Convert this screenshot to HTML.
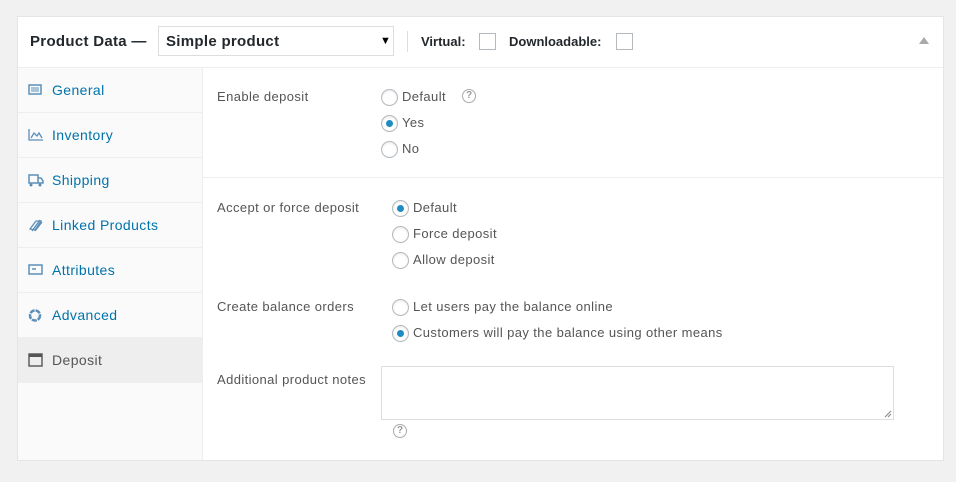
<!DOCTYPE html>
<html><head><style>
body{margin:0;width:956px;height:482px;background:#f1f1f1;font-family:"Liberation Sans",sans-serif;font-size:13px;color:#555;position:relative;overflow:hidden}
.a{position:absolute;white-space:nowrap}
.panel{position:absolute;left:17px;top:16px;width:925px;height:443px;background:#fff;border:1px solid #e5e5e5}
.side{position:absolute;left:18px;top:68px;width:184px;height:392px;background:#fafafa;border-right:1px solid #eee}
.tab{position:absolute;left:0;width:184px;height:44px;border-bottom:1px solid #eee;color:#0073aa;font-size:14px;letter-spacing:0.4px}
.tab span{position:absolute;left:34px;top:14px}
.tab svg{position:absolute;left:10px;top:15px}
.r{position:absolute;width:15px;height:15px;border:1px solid #b4b9be;border-radius:50%;background:#fff;box-shadow:inset 0 1px 2px rgba(0,0,0,.1)}
.r.on::after{content:"";position:absolute;left:4px;top:4px;width:7px;height:7px;border-radius:50%;background:#1e8cbe}
.lab{position:absolute;white-space:nowrap;font-size:13px;color:#555;letter-spacing:0.4px}
.help{position:absolute;width:12px;height:12px;border:1.5px solid #aaa;border-radius:50%;color:#999;font-size:10px;font-weight:bold;text-align:center;line-height:12px}
.cb{position:absolute;width:15px;height:15px;border:1px solid #b4b9be;background:#fff}
</style></head><body>
<div class="panel"></div>
<div class="a" style="left:18px;top:67px;width:925px;border-top:1px solid #eee"></div>
<div class="a" style="left:30px;top:33px;font-size:15px;font-weight:bold;color:#23282d;letter-spacing:0.3px">Product Data —</div>
<div class="a" style="left:158px;top:26px;width:234px;height:28px;border:1px solid #ddd;background:#fff"></div>
<div class="a" style="left:166px;top:33px;font-size:15px;font-weight:bold;color:#23282d;letter-spacing:0.3px">Simple product</div>
<div class="a" style="left:380px;top:35px;font-size:11px;color:#000">▼</div>
<div class="a" style="left:407px;top:31px;height:21px;border-left:1px solid #ddd"></div>
<div class="a" style="left:421px;top:34px;font-weight:bold;color:#23282d">Virtual:</div>
<div class="cb" style="left:479px;top:33px"></div>
<div class="a" style="left:509px;top:34px;font-weight:bold;color:#23282d">Downloadable:</div>
<div class="cb" style="left:616px;top:33px"></div>
<div class="a" style="left:919px;top:37px;width:0;height:0;border-left:5px solid transparent;border-right:5px solid transparent;border-bottom:7px solid #aaa"></div>

<div class="side">
<div class="tab" style="top:0"><svg width="14" height="14"><rect x="1" y="2" width="12" height="9" fill="none" stroke="#5b8fb9" stroke-width="1.5"/><path d="M4 4v5M6 4v5M8 4v5M10 4v5" stroke="#5b8fb9"/></svg><span>General</span></div>
<div class="tab" style="top:45px"><svg width="16" height="14"><path d="M1 1v11h14M3 10l3-5 3 3 2-3 3 5" fill="none" stroke="#5b8fb9" stroke-width="1.3"/></svg><span>Inventory</span></div>
<div class="tab" style="top:90px"><svg width="16" height="15"><path d="M1 2h9v8H1zM10 5h3l2 3v2h-5" fill="none" stroke="#5b8fb9" stroke-width="1.5"/><circle cx="3" cy="12" r="1.5" fill="#5b8fb9"/><circle cx="12" cy="12" r="1.5" fill="#5b8fb9"/></svg><span>Shipping</span></div>
<div class="tab" style="top:135px"><svg width="16" height="15"><path d="M2 11l6-8 5 0-6 9zM4 13l8-11M7 13l7-9" fill="none" stroke="#5b8fb9" stroke-width="1.3"/></svg><span>Linked Products</span></div>
<div class="tab" style="top:180px"><svg width="16" height="14"><rect x="1" y="2" width="13" height="9" fill="none" stroke="#5b8fb9" stroke-width="1.5"/><path d="M4 6h4" stroke="#5b8fb9" stroke-width="1.5"/></svg><span>Attributes</span></div>
<div class="tab" style="top:225px"><svg width="16" height="15"><circle cx="7" cy="7.5" r="5" fill="none" stroke="#5b8fb9" stroke-width="2.5" stroke-dasharray="5 1"/></svg><span>Advanced</span></div>
<div class="tab" style="top:270px;background:#eee;color:#555"><svg width="16" height="15"><rect x="1" y="1" width="13" height="12" fill="none" stroke="#555" stroke-width="1.4"/><rect x="1" y="1" width="13" height="3" fill="#555"/></svg><span>Deposit</span></div>
</div>

<div class="lab" style="left:217px;top:89px">Enable deposit</div>
<div class="r" style="left:381px;top:89px"></div><div class="lab" style="left:402px;top:89px">Default</div>
<div class="help" style="left:462px;top:89px">?</div>
<div class="r on" style="left:381px;top:115px"></div><div class="lab" style="left:402px;top:115px">Yes</div>
<div class="r" style="left:381px;top:141px"></div><div class="lab" style="left:402px;top:141px">No</div>
<div class="a" style="left:203px;top:177px;width:740px;border-top:1px solid #eee"></div>

<div class="lab" style="left:217px;top:200px">Accept or force deposit</div>
<div class="r on" style="left:392px;top:200px"></div><div class="lab" style="left:413px;top:200px">Default</div>
<div class="r" style="left:392px;top:226px"></div><div class="lab" style="left:413px;top:226px">Force deposit</div>
<div class="r" style="left:392px;top:252px"></div><div class="lab" style="left:413px;top:252px">Allow deposit</div>

<div class="lab" style="left:217px;top:299px">Create balance orders</div>
<div class="r" style="left:392px;top:299px"></div><div class="lab" style="left:413px;top:299px">Let users pay the balance online</div>
<div class="r on" style="left:392px;top:325px"></div><div class="lab" style="left:413px;top:325px">Customers will pay the balance using other means</div>

<div class="lab" style="left:217px;top:372px">Additional product notes</div>
<div class="a" style="left:381px;top:366px;width:511px;height:52px;border:1px solid #ddd;background:#fff"></div>
<svg class="a" style="left:884px;top:410px" width="8" height="8"><path d="M1 7L7 1M4 7L7 4" stroke="#888"/></svg>
<div class="help" style="left:393px;top:424px">?</div>
</body></html>
